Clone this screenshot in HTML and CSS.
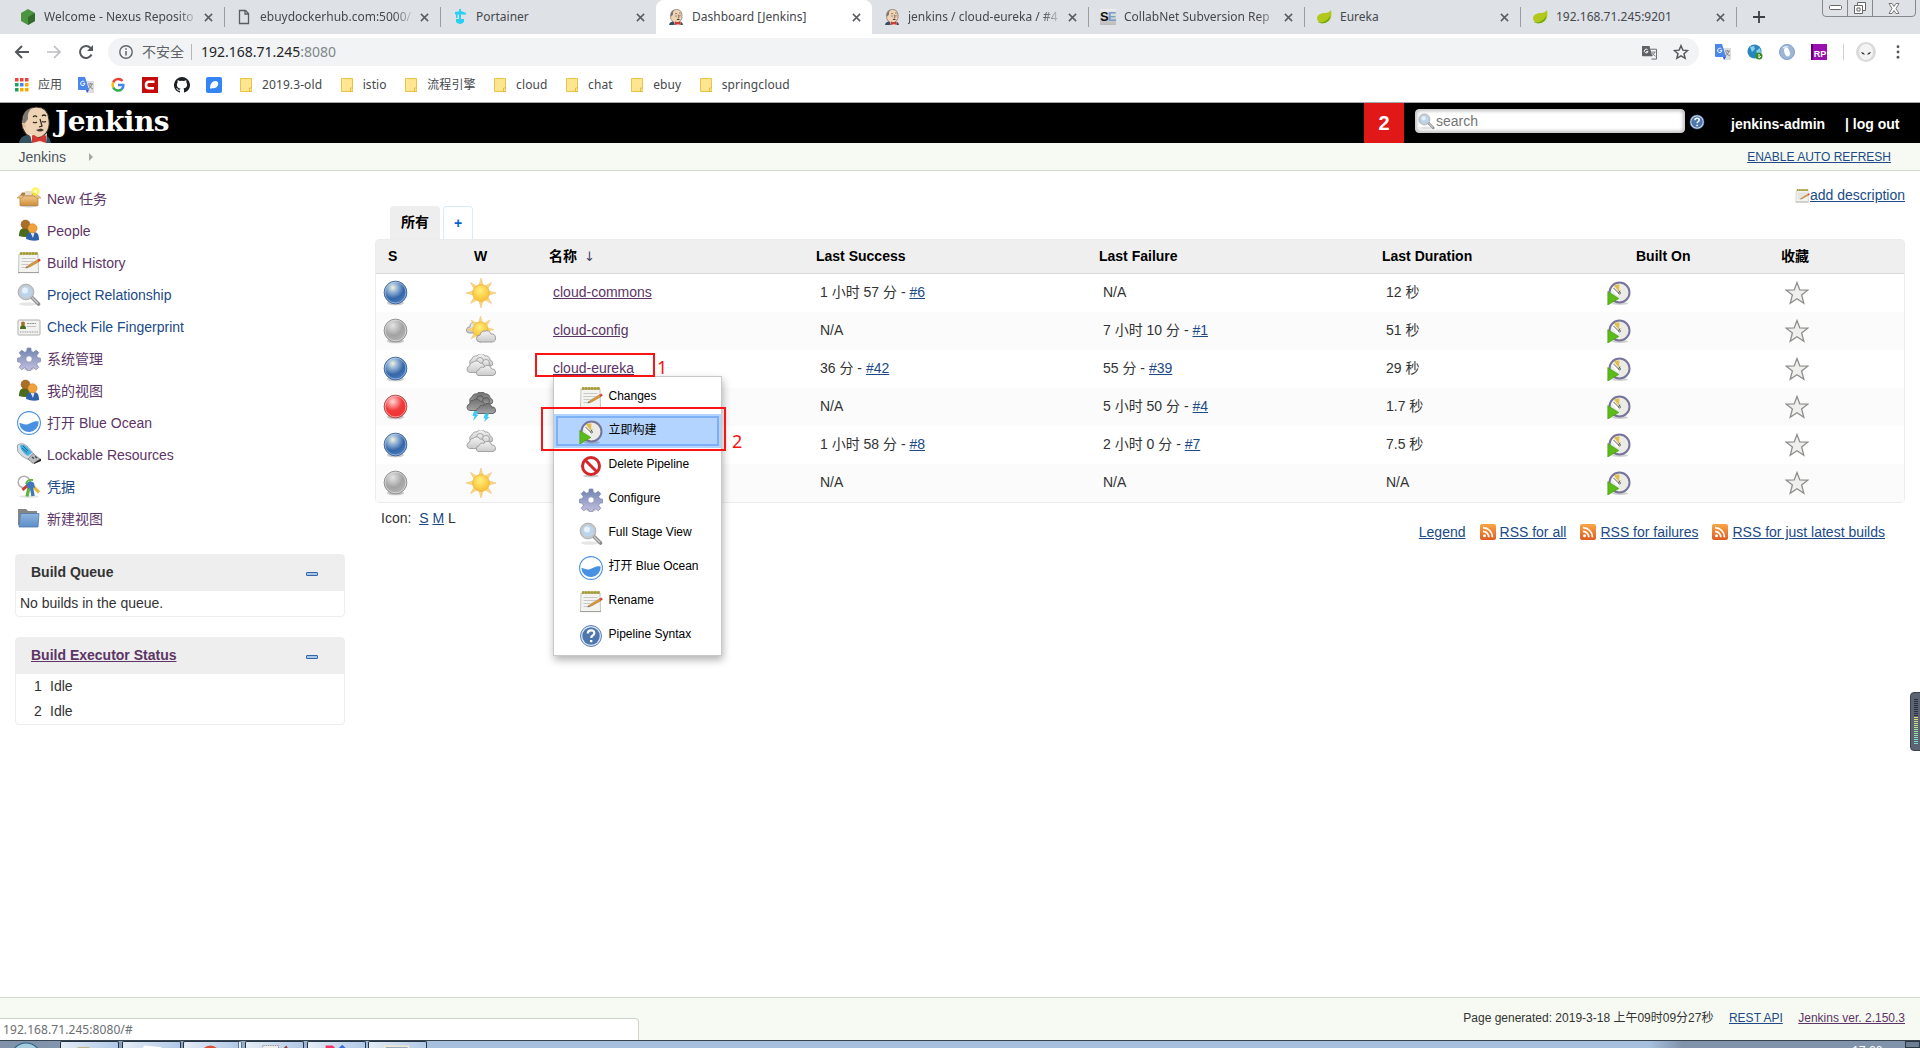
FILE: index.html
```html
<!DOCTYPE html>
<html lang="zh-CN">
<head>
<meta charset="utf-8">
<title>Dashboard [Jenkins]</title>
<link rel="stylesheet" href="styles.css">
</head>
<body>
<svg class="sprite" width="0" height="0">
  <defs>
    <radialGradient id="gBlue" cx=".38" cy=".28" r=".75"><stop offset="0" stop-color="#f2f2dc"/><stop offset=".3" stop-color="#8fb0d4"/><stop offset=".65" stop-color="#3566a8"/><stop offset="1" stop-color="#4a7cc0"/></radialGradient>
    <radialGradient id="gGrey" cx=".38" cy=".28" r=".8"><stop offset="0" stop-color="#e4e4e4"/><stop offset=".55" stop-color="#a2a2a2"/><stop offset="1" stop-color="#b8b8b8"/></radialGradient>
    <radialGradient id="gRed" cx=".38" cy=".28" r=".8"><stop offset="0" stop-color="#ffd9d9"/><stop offset=".5" stop-color="#f23c3c"/><stop offset="1" stop-color="#ee2b2b"/></radialGradient>
    <radialGradient id="gSun" cx=".45" cy=".35" r=".7"><stop offset="0" stop-color="#fff07a"/><stop offset="1" stop-color="#fbb92c"/></radialGradient>
    <linearGradient id="gCloud" x2="0" y2="1"><stop offset="0" stop-color="#f3f3f3"/><stop offset="1" stop-color="#cacaca"/></linearGradient>
    <linearGradient id="gDark" x2="0" y2="1"><stop offset="0" stop-color="#707070"/><stop offset="1" stop-color="#a3a3a3"/></linearGradient>
    <linearGradient id="gGear" x2="0" y2="1"><stop offset="0" stop-color="#6d83b0"/><stop offset="1" stop-color="#c5c0e0"/></linearGradient>
    <linearGradient id="gBox" x2="0" y2="1"><stop offset="0" stop-color="#f0c98b"/><stop offset="1" stop-color="#cf8e3c"/></linearGradient>
    <linearGradient id="gFolder" x2="0" y2="1"><stop offset="0" stop-color="#8fb4dc"/><stop offset="1" stop-color="#5c8fc9"/></linearGradient>
    <linearGradient id="gRss" x2="0" y2="1"><stop offset="0" stop-color="#f9a646"/><stop offset="1" stop-color="#dc5d22"/></linearGradient>
  </defs>
  <symbol id="ball-blue" viewBox="0 0 26 26"><ellipse cx="13" cy="23.5" rx="9" ry="2.3" fill="#000" opacity=".2"/><circle cx="13" cy="12.5" r="11.8" fill="url(#gBlue)" stroke="#3b659c"/><circle cx="13" cy="12.5" r="10.8" fill="none" stroke="#cddcf0" stroke-opacity=".55"/></symbol>
  <symbol id="ball-grey" viewBox="0 0 26 26"><ellipse cx="13" cy="23.5" rx="9" ry="2.3" fill="#000" opacity=".2"/><circle cx="13" cy="12.5" r="11.8" fill="url(#gGrey)" stroke="#8b8b8b"/><circle cx="13" cy="12.5" r="10.8" fill="none" stroke="#eee" stroke-opacity=".6"/></symbol>
  <symbol id="ball-red" viewBox="0 0 26 26"><ellipse cx="13" cy="23.5" rx="9" ry="2.3" fill="#000" opacity=".2"/><circle cx="13" cy="12.5" r="11.8" fill="url(#gRed)" stroke="#b04848"/><circle cx="13" cy="12.5" r="10.8" fill="none" stroke="#ffc4c4" stroke-opacity=".7"/></symbol>
  <symbol id="sun" viewBox="0 0 30 30"><path fill="#fbd67c" stroke="#e8bf6a" stroke-width=".5" d="M15 0l2 7h-4zM15 30l2-7h-4zM0 15l7-2v4zM30 15l-7-2v4zM4.4 4.4l6.4 3.6-2.8 2.8zM25.600 4.400l-3.600 6.400-2.800-2.800zM4.400 25.600l3.600-6.400 2.800 2.800zM25.600 25.600l-6.400-3.600 2.800-2.800z"/><circle cx="15" cy="15" r="8.300" fill="url(#gSun)" stroke="#f4b93f"/></symbol>
  <symbol id="cloud" viewBox="0 0 30 24"><g stroke="#9b9b9b" stroke-width=".9" fill="url(#gCloud)"><path d="M5 11a3.500 3.500 0 0 1 1-6 4 4 0 0 1 5-3 4.500 4.500 0 0 1 8 0 4 4 0 0 1 5 4 3.500 3.500 0 0 1 2 5.500z"/><circle cx="14" cy="7" r="3.500"/><circle cx="20" cy="9" r="3.500"/><path d="M3.500 18.500a3.300 3.300 0 0 1 0-6.400 4 4 0 0 1 4-4 4 4 0 0 1 6.500 1 4 4 0 0 1 4.500 4l-.5 5.400z"/><path d="M12 21.500a3 3 0 0 1 1-5.700 3.500 3.500 0 0 1 5-2.300 4 4 0 0 1 7.500 1.500 3.300 3.300 0 0 1 1.500 6.500z"/></g></symbol>
  <symbol id="partly" viewBox="0 0 30 30"><g stroke="#9b9b9b" fill="url(#gCloud)"><path d="M3 17a3 3 0 0 1 1-6 4 4 0 0 1 8-1v7z"/></g><use href="#sun" width="27" height="27" x="1" y="0"/><path stroke="#9b9b9b" fill="url(#gCloud)" d="M14 26a3.500 3.500 0 0 1 0-7 5 5 0 0 1 5-4 5 5 0 0 1 6 3 4 4 0 0 1 1 8z"/></symbol>
  <symbol id="storm" viewBox="0 0 30 30"><g stroke="#5c5c5c" stroke-width=".9" fill="url(#gDark)"><path d="M5 11a3.500 3.500 0 0 1 1-6 4 4 0 0 1 5-3 4.500 4.500 0 0 1 8 0 4 4 0 0 1 5 4 3.500 3.500 0 0 1 2 5.500z"/><circle cx="14" cy="7" r="3.500"/><circle cx="20" cy="9" r="3.500"/><path d="M3.500 18.500a3.300 3.300 0 0 1 0-6.400 4 4 0 0 1 4-4 4 4 0 0 1 6.500 1 4 4 0 0 1 4.500 4l-.5 5.400z"/><path d="M12 21.500a3 3 0 0 1 1-5.700 3.500 3.500 0 0 1 5-2.300 4 4 0 0 1 7.500 1.500 3.300 3.300 0 0 1 1.500 6.500z"/></g><path fill="#3ccbf5" d="M8 19h4l-1.500 3.500h2L7 29l1.500-5h-2zM19 21.500h4l-1.500 3.500h2L18 30l1.500-3.500h-2z"/></symbol>
  <symbol id="clock" viewBox="0 0 24 24"><ellipse cx="13" cy="22.500" rx="8" ry="1.500" fill="#000" opacity=".18"/><circle cx="12.500" cy="11.500" r="10" fill="#ecece7" stroke="#77759b" stroke-width="2"/><path d="M12 11L7 4.500Q10 3 12.500 3.500z" fill="#e2bf4d"/><path d="M4.500 8l2-1.500 6 6.500-2 2z" fill="#fff"/><path d="M6.500 7l5.500 5.500M13 9.500l-1 2" stroke="#555" stroke-width=".9" fill="none"/><circle cx="12.500" cy="12" r="1" fill="#fff" stroke="#444" stroke-width=".8"/><path d="M.8 10.500v13.500l11-6.500z" fill="#5cbb18" stroke="#3f9410" stroke-width=".6"/></symbol>
  <symbol id="star" viewBox="0 0 24 24"><path d="M12 1.500l2.800 7.400 8 .3-6.200 4.800 2.200 8.200-6.800-4.500-6.800 4.500L7.400 14 1.200 9.200l8-.3z" fill="#efefed" stroke="#8d8d8a" stroke-width="1.300"/></symbol>
  <symbol id="newjob" viewBox="0 0 24 24"><ellipse cx="12" cy="19" rx="9" ry="1.500" opacity=".2"/><path d="M5 5.500h13l3 3H3z" fill="#ad7b3a"/><path d="M8 4h7v4H8z" fill="#e6dcc8"/><path d="M3 9h18v9.500H3z" fill="url(#gBox)" stroke="#b57b32" stroke-width=".7"/><path d="M3 8.500L0 11h5l2-2zM21 8.500l3 2.500h-5l-2-2z" fill="#edc68c" stroke="#b57b32" stroke-width=".5"/><circle cx="18.500" cy="4.500" r="4.200" fill="#fff34c" opacity=".85"/><circle cx="18.500" cy="4.500" r="1.800" fill="#fffcc0"/></symbol>
  <symbol id="people" viewBox="0 0 24 24"><path d="M2 17c0-6 2-8 6-8s5 3 5 8q-5 2-11 0z" fill="#4b6b1a"/><circle cx="8.500" cy="5.500" r="4.500" fill="#a86f26" stroke="#8a5a1c" stroke-width=".5"/><path d="M9 20c0-5 2-7 7-7s6 3 6 8q-6 2-13-1z" fill="#2f62ab"/><path d="M13.500 13.500h4L16 19z" fill="#e9eff8"/><circle cx="15.500" cy="9.300" r="4.600" fill="#f0a03c" stroke="#c57a1c" stroke-width=".5"/></symbol>
  <symbol id="notepad" viewBox="0 0 24 24"><path d="M2 3h19l.5 18.500h-20z" fill="#f3f3ef" stroke="#b5b5b0" stroke-width=".8"/><path d="M1 21.200h21v.9H1z" fill="#999"/><path d="M3 1.300h18v2.400H3z" fill="#b5ad45"/><path d="M4 1v3M7 1v3M10 1v3M13 1v3M16 1v3M19 1v3" stroke="#857d28" stroke-width=".8"/><path d="M4.500 7.500h14M4.500 10.500h12M4.500 13.500h7M4.500 16.500h4" stroke="#c4c4c4" stroke-width=".9"/><path d="M9.500 17l2-2.800L21 8.500l1.200 2L13 15.700z" fill="#dc9a3c" stroke="#9c6a28" stroke-width=".5"/><path d="M20.500 8.800l2-1.200 1.300 1.900-2.200 1.300z" fill="#d8433a"/><path d="M8 17.500l2.500-1.500-.8-.8z" fill="#444"/></symbol>
  <symbol id="lens" viewBox="0 0 24 24"><ellipse cx="11" cy="21" rx="9" ry="1.800" opacity=".1"/><path d="M14.500 14l7 7" stroke="#8a8a8a" stroke-width="3.600" stroke-linecap="round"/><path d="M14.500 14l6.500 6.500" stroke="#c8c8c8" stroke-width="1.600"/><circle cx="9" cy="9" r="6.800" fill="#bcd5ee" stroke="#c6c8ca" stroke-width="2.200"/><circle cx="9" cy="9" r="7.900" fill="none" stroke="#909498" stroke-width=".6"/><circle cx="8" cy="7.500" r="3" fill="#e6f1fb"/></symbol>
  <symbol id="card" viewBox="0 0 24 24"><rect x="1" y="5" width="22" height="15" rx="1" fill="#f2f2f0" stroke="#b0b0ae"/><path d="M3 14q0-4 3-4t3 4z" fill="#4b6b1a"/><circle cx="6" cy="8.500" r="2" fill="#a86f26"/><path d="M10 8.500h9" stroke="#888" stroke-dasharray="2 .6" stroke-width=".9"/><path d="M10 11.500h9" stroke="#c4c4c4"/><path d="M3 17h18" stroke="#777" stroke-dasharray="1 .7" stroke-width=".8"/></symbol>
  <symbol id="gear" viewBox="0 0 24 24"><ellipse cx="12" cy="22" rx="5" ry="1.300" opacity=".2"/><path fill="url(#gGear)" stroke="#7b83a8" stroke-width=".7" fill-rule="evenodd" d="M10.200 1h3.600l.5 3.400 2.200.9 2.800-2.100 2.500 2.500-2.100 2.800.9 2.200 3 .5v3.600l-3 .5-.9 2.200 2.100 2.800-2.500 2.500-2.800-2.100-2.200.9-.5 2h-3.600l-.5-2-2.200-.9-2.800 2.100-2.500-2.500 2.100-2.800-.9-2.200-3-.5v-3.600l3-.5.900-2.200-2.100-2.800 2.500-2.500 2.800 2.100 2.200-.9zM12 8.800a3.200 3.200 0 1 0 0 6.400 3.200 3.200 0 1 0 0-6.400z"/></symbol>
  <symbol id="ocean" viewBox="0 0 24 24"><circle cx="12" cy="12" r="11.400" fill="#fff" stroke="#4a90e2" stroke-width="1.100"/><path d="M2.300 12c3 0 4 2 7.500 1.500S16 9.500 21.700 10.500A9.700 9.700 0 0 1 2.300 12z" fill="#4a90e2"/></symbol>
  <symbol id="usb" viewBox="0 0 24 24"><path d="M.5 2Q5-1 10 3l7 8-4.500 6Q4 14 .5 8z" fill="#d6dae0" stroke="#9096a0" stroke-width=".8"/><path d="M3 2.500q3.500-2 7 1.500l5 5.500-4 3.500Q4 9 3 2.500z" fill="#3fb0e2"/><path d="M6 3l5 5M5 5l5 4.500" stroke="#1d6996"/><path d="M16 10.500l7 5.500-7 4.500-5-4.500z" fill="#b9bcc0" stroke="#777" stroke-width=".7"/><path d="M17 20l7-4.500v2.500l-7 3z" fill="#222"/><path d="M15 14l2 1.500M18 13.500l2 1.500" stroke="#444" stroke-width="1.300"/></symbol>
  <symbol id="keys" viewBox="0 0 24 24"><ellipse cx="12" cy="21.500" rx="10" ry="1.500" opacity=".1"/><circle cx="7" cy="7" r="5.800" fill="none" stroke="#b0b0b0" stroke-width="1.500"/><path d="M12 9L5.500 15" stroke="#d13a30" stroke-width="3"/><path d="M14 9l8 8.500" stroke="#e3b83a" stroke-width="3.200"/><path d="M12.500 10L10 21.500" stroke="#5fb336" stroke-width="3.200"/><path d="M14 10l2 11" stroke="#4178bd" stroke-width="3.400"/><path d="M9 9q4-5 8-1l1 5q-4-2-7 1z" fill="#4178bd"/><path d="M9 9q1-5 7-4" stroke="#5fb336" stroke-width="1.800" fill="none"/></symbol>
  <symbol id="folder" viewBox="0 0 24 24"><path d="M1 2h8l2 2h9v14H1z" fill="#858585"/><path d="M3.500 6.500h18.500L21 20H2z" fill="url(#gFolder)" stroke="#5079ac" stroke-width=".8"/></symbol>
  <symbol id="forbid" viewBox="0 0 24 24"><ellipse cx="12" cy="22" rx="8" ry="1.500" opacity=".2"/><circle cx="12" cy="12" r="8.500" fill="#fff" stroke="#d2282b" stroke-width="3"/><path d="M6 6l12 12" stroke="#d2282b" stroke-width="3"/></symbol>
  <symbol id="help" viewBox="0 0 24 24"><circle cx="12" cy="12" r="10.500" fill="#dfe7f2" stroke="#4871a8" stroke-width=".9"/><circle cx="12" cy="12" r="8.700" fill="#4c76ad"/><path d="M8.800 9.500q0-3.200 3.300-3.200t3.200 2.800q0 1.600-1.600 2.400-1.500.8-1.500 2.500M12.200 16v2.200" fill="none" stroke="#fff" stroke-width="2.300"/></symbol>
  <symbol id="rss" viewBox="0 0 16 16"><rect width="16" height="16" rx="2" fill="url(#gRss)"/><circle cx="4.500" cy="11.700" r="1.500" fill="#fff"/><path d="M3 7.300a6 6 0 0 1 5.800 5.900M3 3.700a9.500 9.500 0 0 1 9.500 9.500" fill="none" stroke="#fff" stroke-width="1.700"/></symbol>
  <symbol id="close" viewBox="0 0 10 10"><path d="M1 1l8 8M9 1l-8 8" stroke="#5a5d61" stroke-width="1.700"/></symbol>
  <symbol id="butler" viewBox="0 0 34 37"><path d="M1 37q1-7 8-8l14-1q9 1 10 9z" fill="#335061"/><path d="M8 28Q3 22 4 15 5 2 18 1q12 0 13 13 1 8-3 13-4 5-9 5-7 0-11-4z" fill="#efd3b5" stroke="#3a2b25"/><path d="M5 14Q5 4 14 2q-5 4-4 11l-3 4q-2 1-2 3z" fill="#7b7775"/><path d="M4 17q3-1 4 3-1 3-3 2z" fill="#e3bd9d"/><path d="M15 11q2-2 4 0M24 10q2-2 4 0M15 16q2 1.500 4 0M24 15.500q2 1 4 0M22 13l2 7-3 1" fill="none" stroke="#2d2421" stroke-width="1.200"/><path d="M18 24q4 3 8 0l-3-1.500z" fill="#41352e"/><path d="M12 28l9 6 8-7-1 10H14z" fill="#f4f1ea"/><path d="M14 31q-1-2 2-2l5 3 5-3q3 0 2 3v5l-6-2-8 2z" fill="#d33833"/></symbol>
  <symbol id="leaf" viewBox="0 0 16 16"><path d="M1 8Q3 4 9 4q4 0 6-3 2.500 13-9 13Q1 14 1 8z" fill="#b2c81d"/><path d="M1 13.500q9 1 13.500-7-.5 7-8 8z" fill="#6da914"/></symbol>
  <symbol id="dir" viewBox="0 0 12 14"><path d="M.5.500h11v13H.5z" fill="#ffe58f" stroke="#e8c547"/><path d="M9.500 10h2.500v3.500h-2.500z" fill="#ffe58f" stroke="#dcb430" stroke-width=".8"/></symbol>
  <symbol id="translate" viewBox="0 0 16 16"><path d="M6 4h10v12H9z" fill="#dcdde0"/><path d="M0 0h7l4 13H1q-1 0-1-1z" fill="#4a86ec"/><path d="M8 13h3l-2 3z" fill="#2f5fc0"/><path d="M6.500 5A2.200 2.200 0 1 0 7 6.700H4.800" fill="none" stroke="#fff"/><path d="M10 7h5M12.500 6v1M14 7q-1 4-4 5M11 8q1 3 4 4" stroke="#777" stroke-width=".8" fill="none"/></symbol>
</svg>

<header class="tabstrip">
  <div class="tab"><svg class="fav" viewBox="0 0 16 16"><path d="M8 0l7 4v8l-7 4-7-4V4z" fill="#4c9440"/><path d="M8 8l7-4v8l-7 4z" fill="#336b2c"/></svg><span class="ttl fade">Welcome - Nexus Reposito</span><svg class="x"><use href="#close"/></svg></div>
  <div class="tab"><svg class="fav" viewBox="0 0 16 16"><path d="M3.500 1.500h6l3 3v10h-9zM9 1.500v3.500h3.500" fill="none" stroke="#5a5d61" stroke-width="1.300"/></svg><span class="ttl fade">ebuydockerhub.com:5000/</span><svg class="x"><use href="#close"/></svg></div>
  <div class="tab last"><svg class="fav" viewBox="0 0 16 16"><path d="M3 3l6-1 5 2v1.500H3zM7 0h2v10H7zM4 5h1.500v4H4zM4 10h8v3q-4 4-8 0z" fill="#2ad0f4"/></svg><span class="ttl">Portainer</span><svg class="x"><use href="#close"/></svg></div>
  <div class="tab active"><svg class="fav"><use href="#butler"/></svg><span class="ttl">Dashboard [Jenkins]</span><svg class="x"><use href="#close"/></svg></div>
  <div class="tab"><svg class="fav"><use href="#butler"/></svg><span class="ttl fade">jenkins / cloud-eureka / #4</span><svg class="x"><use href="#close"/></svg></div>
  <div class="tab"><span class="fav se"><b>S</b><i>E</i></span><span class="ttl fade">CollabNet Subversion Rep</span><svg class="x"><use href="#close"/></svg></div>
  <div class="tab"><svg class="fav"><use href="#leaf"/></svg><span class="ttl">Eureka</span><svg class="x"><use href="#close"/></svg></div>
  <div class="tab"><svg class="fav"><use href="#leaf"/></svg><span class="ttl">192.168.71.245:9201</span><svg class="x"><use href="#close"/></svg></div>
  <svg class="plus" viewBox="0 0 12 12"><path d="M6 0v12M0 6h12" stroke="#3c4043" stroke-width="1.800"/></svg>
  <div class="winctl"><span><svg width="13" height="6"><rect x=".5" y=".5" width="12" height="4" rx="1" fill="#fff" stroke="#666"/></svg></span><span><svg width="14" height="13" viewBox="0 0 14 13" fill="#fff" stroke="#666"><path d="M4.500.500h8v8h-8z"/><path d="M1.500 3.500h8v8h-8zM4 6h3v3H4z"/></svg></span><span><svg width="12" height="11" viewBox="0 0 12 11"><path d="M1 .500h3l2 3 2-3h3L8 5.500l3 5H8l-2-3-2 3H1l3-5z" fill="#fff" stroke="#777"/></svg></span></div>
</header>

<div class="toolbar">
  <svg class="nav" viewBox="0 0 16 16"><path d="M15 8H2M8 2L2 8l6 6" fill="none" stroke="#54575b" stroke-width="2"/></svg>
  <svg class="nav" viewBox="0 0 16 16"><path d="M1 8h13M8 2l6 6-6 6" fill="none" stroke="#bcbec1" stroke-width="1.700"/></svg>
  <svg class="nav" viewBox="0 0 16 16"><path d="M13.500 10.500A6 6 0 1 1 12.500 4" fill="none" stroke="#54575b" stroke-width="2"/><path d="M15 1v6H9z" fill="#54575b"/></svg>
  <div class="omnibox">
    <svg width="14" height="14" viewBox="0 0 14 14"><circle cx="7" cy="7" r="6.200" fill="none" stroke="#5f6368" stroke-width="1.400"/><path d="M7 6v4.500M7 3.200v1.600" stroke="#5f6368" stroke-width="1.500"/></svg>
    <span class="insecure">不安全</span>
    <span class="url">192.168.71.245<em>:8080</em></span>
    <svg class="tr" width="15" height="15" viewBox="0 0 16 16"><path d="M0 1h8l3 11H1q-1 0-1-1z" fill="#5f6368"/><path d="M9 4.500h6.500v10.500H10" fill="none" stroke="#5f6368"/><path d="M6 5A2 2 0 1 0 6.500 7H4.500" fill="none" stroke="#fff"/><path d="M10 7.500h4.500M13.500 7.500q-1 3-3 4M11 8.500q1 2.500 3.500 3.500" stroke="#5f6368" fill="none" stroke-width=".8"/></svg>
    <svg width="16" height="16" viewBox="0 0 24 24"><path d="M12 2.500l2.800 6.700 7.200.6-5.500 4.700 1.700 7L12 17.800l-6.200 3.700 1.700-7L2 9.800l7.200-.6z" fill="none" stroke="#54575b" stroke-width="2.200"/></svg>
  </div>
  <div class="exts">
    <svg><use href="#translate"/></svg>
    <svg viewBox="0 0 16 16"><circle cx="7.500" cy="7.500" r="7" fill="#2787bd"/><path d="M3 3l4-1 1 3-3 3zM9 7l4-3 1 5-3 2z" fill="#8ad0e6"/><circle cx="12" cy="12" r="3.500" fill="#3c8a2a"/><path d="M12 10v4l2-2" stroke="#fff" fill="none"/></svg>
    <svg viewBox="0 0 16 16"><circle cx="8" cy="8" r="7.500" fill="#9db6d6" stroke="#7d9fc9"/><ellipse cx="8" cy="8" rx="2.600" ry="4.500" fill="#fff" transform="rotate(-20 8 8)"/><path d="M4 4q3-2 5-1" stroke="#e4edf7" stroke-width="1.500" fill="none"/></svg>
    <span class="rp">RP</span>
  </div>
  <svg class="avatar" viewBox="0 0 20 20"><circle cx="10" cy="10" r="10" fill="#dadada"/><ellipse cx="10" cy="10" rx="7" ry="8" fill="#f3f3f3"/><path d="M5 10q3 0 4 2.500-3 .5-4-2.500zM15 10q-3 0-4 2.500 3 .5 4-2.500z" fill="#333"/></svg>
  <svg class="dots" viewBox="0 0 4 16"><circle cx="2" cy="2" r="1.600"/><circle cx="2" cy="8" r="1.600"/><circle cx="2" cy="14" r="1.600"/></svg>
</div>

<nav class="bookmarks">
  <svg class="apps" viewBox="0 0 14 14"><path d="M0 0h3.500v3.500H0zM5 0h3.500v3.500H5zM10 0h3.500v3.500H10z" fill="#e8453c"/><path d="M0 5h3.500v3.500H0zM0 10h3.500v3.500H0z" fill="#1aa260"/><path d="M5 5h3.500v3.500H5z" fill="#4285f4"/><path d="M10 5h3.500v3.500H10zM5 10h3.500v3.500H5zM10 10h3.500v3.500H10z" fill="#f9ab00"/></svg>
  <span class="apptxt">应用</span>
  <svg class="bi"><use href="#translate"/></svg>
  <svg class="bi" viewBox="0 0 16 16"><g fill="none" stroke-width="2.500"><path d="M12.500 4A5.500 5.500 0 0 0 3.200 5.500" stroke="#ea4335"/><path d="M3.200 5.500a5.500 5.500 0 0 0 0 5" stroke="#fbbc05"/><path d="M3.200 10.500a5.500 5.500 0 0 0 8.500 1.800" stroke="#34a853"/><path d="M11.700 12.300Q13.500 10.500 13.300 8H8" stroke="#4285f4"/></g></svg>
  <svg class="bi" viewBox="0 0 16 16"><path d="M0 0h16v16H0z" fill="#c50c0c"/><path d="M12.500 4.700H7Q4 4.700 4 8t3 3.300h5" fill="none" stroke="#fff" stroke-width="2.600"/></svg>
  <svg class="bi" viewBox="0 0 16 16"><path fill="#1b1f23" d="M8 0a8 8 0 0 0-2.500 15.600c.4.100.5-.2.500-.4v-1.500c-2.200.5-2.700-.9-2.700-.9-.4-.9-.9-1.200-.9-1.200-.7-.5.100-.5.100-.5.800.1 1.200.8 1.200.8.700 1.300 1.900.9 2.300.7.100-.5.300-.9.500-1.100-1.800-.2-3.600-.9-3.600-4 0-.9.300-1.600.8-2.100-.1-.2-.4-1 .1-2.100 0 0 .7-.2 2.200.8a7.500 7.500 0 0 1 4 0c1.500-1 2.200-.8 2.200-.8.400 1.100.2 1.900.1 2.100.5.600.8 1.300.8 2.100 0 3.100-1.900 3.700-3.700 3.900.3.300.6.800.6 1.500v2.300c0 .2.100.5.500.4A8 8 0 0 0 8 0z"/></svg>
  <svg class="bi" viewBox="0 0 16 16"><rect width="16" height="16" rx="2" fill="#3385f5"/><path d="M4 11q0-6 5-7 4 0 3 4-2 4-6 3l-1 1z" fill="#fff"/></svg>
  <span class="bm"><svg><use href="#dir"/></svg>2019.3-old</span>
  <span class="bm"><svg><use href="#dir"/></svg>istio</span>
  <span class="bm"><svg><use href="#dir"/></svg>流程引擎</span>
  <span class="bm"><svg><use href="#dir"/></svg>cloud</span>
  <span class="bm"><svg><use href="#dir"/></svg>chat</span>
  <span class="bm"><svg><use href="#dir"/></svg>ebuy</span>
  <span class="bm"><svg><use href="#dir"/></svg>springcloud</span>
</nav>

<div class="jheader">
  <svg class="logo"><use href="#butler"/></svg><span class="brand">Jenkins</span>
  <span class="alerts">2</span>
  <div class="search"><svg><use href="#lens"/></svg>search</div>
  <svg class="hlp"><use href="#help"/></svg>
  <span class="user">jenkins-admin</span><span class="logout">| log out</span>
</div>
<div class="crumbs"><span>Jenkins</span><svg width="4" height="8"><path d="M0 0l4 4-4 4z" fill="#a5a8a2"/></svg><a class="refresh">ENABLE AUTO REFRESH</a></div>

<div class="page">
  <aside>
    <div class="tasks">
      <a class="v"><svg><use href="#newjob"/></svg>New 任务</a>
      <a class="v"><svg><use href="#people"/></svg>People</a>
      <a class="v"><svg><use href="#notepad"/></svg>Build History</a>
      <a><svg><use href="#lens"/></svg>Project Relationship</a>
      <a><svg><use href="#card"/></svg>Check File Fingerprint</a>
      <a class="v"><svg><use href="#gear"/></svg>系统管理</a>
      <a class="v"><svg><use href="#people"/></svg>我的视图</a>
      <a class="v"><svg><use href="#ocean"/></svg>打开 Blue Ocean</a>
      <a class="v"><svg><use href="#usb"/></svg>Lockable Resources</a>
      <a><svg><use href="#keys"/></svg>凭据</a>
      <a class="v"><svg><use href="#folder"/></svg>新建视图</a>
    </div>
    <section class="pane queue"><h2>Build Queue<i></i></h2><p>No builds in the queue.</p></section>
    <section class="pane exec"><h2><a>Build Executor Status</a><i></i></h2><ul><li><b>1</b>Idle</li><li><b>2</b>Idle</li></ul></section>
  </aside>
  <main>
    <div class="desc"><svg><use href="#notepad"/></svg><a>add description</a></div>
    <div class="views"><span class="on">所有</span><span class="add">+</span></div>
    <div class="table">
      <div class="row head"><span>S</span><span>W</span><span>名称 <small>↓</small></span><span>Last Success</span><span>Last Failure</span><span>Last Duration</span><span>Built On</span><span>收藏</span></div>
      <div class="row"><svg class="ball"><use href="#ball-blue"/></svg><svg class="wx"><use href="#sun"/></svg><span><a class="v">cloud-commons</a></span><span>1 小时 57 分 - <a>#6</a></span><span>N/A</span><span>12 秒</span><svg class="ic"><use href="#clock"/></svg><svg class="ic st"><use href="#star"/></svg></div>
      <div class="row"><svg class="ball"><use href="#ball-grey"/></svg><svg class="wx"><use href="#partly"/></svg><span><a class="v">cloud-config</a></span><span>N/A</span><span>7 小时 10 分 - <a>#1</a></span><span>51 秒</span><svg class="ic"><use href="#clock"/></svg><svg class="ic st"><use href="#star"/></svg></div>
      <div class="row"><svg class="ball"><use href="#ball-blue"/></svg><svg class="wx cl"><use href="#cloud"/></svg><span><a class="v">cloud-eureka</a></span><span>36 分 - <a>#42</a></span><span>55 分 - <a>#39</a></span><span>29 秒</span><svg class="ic"><use href="#clock"/></svg><svg class="ic st"><use href="#star"/></svg></div>
      <div class="row"><svg class="ball"><use href="#ball-red"/></svg><svg class="wx"><use href="#storm"/></svg><span></span><span>N/A</span><span>5 小时 50 分 - <a>#4</a></span><span>1.7 秒</span><svg class="ic"><use href="#clock"/></svg><svg class="ic st"><use href="#star"/></svg></div>
      <div class="row"><svg class="ball"><use href="#ball-blue"/></svg><svg class="wx cl"><use href="#cloud"/></svg><span></span><span>1 小时 58 分 - <a>#8</a></span><span>2 小时 0 分 - <a>#7</a></span><span>7.5 秒</span><svg class="ic"><use href="#clock"/></svg><svg class="ic st"><use href="#star"/></svg></div>
      <div class="row"><svg class="ball"><use href="#ball-grey"/></svg><svg class="wx"><use href="#sun"/></svg><span></span><span>N/A</span><span>N/A</span><span>N/A</span><svg class="ic"><use href="#clock"/></svg><svg class="ic st"><use href="#star"/></svg></div>
    </div>
    <div class="below">
      <div class="sizes">Icon: &nbsp;<a>S</a> <a>M</a> L</div>
      <div class="feeds"><a>Legend</a><span><svg><use href="#rss"/></svg><a>RSS for all</a></span><span><svg><use href="#rss"/></svg><a>RSS for failures</a></span><span><svg><use href="#rss"/></svg><a>RSS for just latest builds</a></span></div>
    </div>
  </main>
</div>

<footer><span>Page generated: 2019-3-18 上午09时09分27秒</span><a>REST API</a><a class="v">Jenkins ver. 2.150.3</a></footer>
<div class="taskbar">
  <span class="orb"></span>
  <span class="tk"><svg viewBox="0 0 58 8"><path d="M14 8h16l-2-2H15z" fill="#b9a768"/></svg></span>
  <span class="tk"><svg viewBox="0 0 58 8"><path d="M18 8l2-4 20 2-2 2z" fill="#fff"/></svg></span>
  <span class="tk stack"><svg viewBox="0 0 58 8"><circle cx="26" cy="15" r="11" fill="#dd4b39"/></svg></span>
  <span class="tk"><svg viewBox="0 0 58 8"><path d="M15 4h18v4H15z" fill="#eee" stroke="#777" stroke-dasharray="1 1"/><path d="M38 8l4-4 2 4z" fill="#933"/></svg></span>
  <span class="tk"><svg viewBox="0 0 58 8"><path d="M16 4h8l4 4H16z" fill="#fa2e68"/><path d="M30 8l5-5 5 5z" fill="#3f6ad8"/></svg></span>
  <span class="tk"><svg viewBox="0 0 58 8"><path d="M14 8V5h27v3" fill="#7d97bf" stroke="#eee8d0" stroke-width="2"/></svg></span>
  <span class="tray"><span>17:00</span></span><span class="showdesk"></span>
</div>

<div class="statusurl">192.168.71.245:8080/#</div>

<div class="menu">
  <a><svg><use href="#notepad"/></svg><span>Changes</span></a>
  <a class="sel"><svg><use href="#clock"/></svg><span>立即构建</span></a>
  <a><svg><use href="#forbid"/></svg><span>Delete Pipeline</span></a>
  <a><svg><use href="#gear"/></svg><span>Configure</span></a>
  <a><svg><use href="#lens"/></svg><span>Full Stage View</span></a>
  <a><svg><use href="#ocean"/></svg><span>打开 Blue Ocean</span></a>
  <a><svg><use href="#notepad"/></svg><span>Rename</span></a>
  <a><svg><use href="#help"/></svg><span>Pipeline Syntax</span></a>
</div>
<div class="mark m1"></div><span class="num n1">1</span>
<div class="mark m2"></div><span class="num n2">2</span>
<div class="meter"><i></i></div>
</body>
</html>
```
FILE: styles.css
```css
* { box-sizing: border-box; }
body {
  margin: 0; width: 1920px; height: 1048px; overflow: hidden; position: relative;
  display: flex; flex-direction: column; background: #fff; color: #333;
  font: 14px/20px "Liberation Sans", "Noto Sans CJK SC", sans-serif;
}
svg { display: block; flex: none; }
.sprite { position: absolute; }
a { color: #204a87; text-decoration: underline; }
a.v { color: #5c3566; }

/* browser chrome */
.tabstrip, .toolbar, .bookmarks, .statusurl { font-family: "Noto Sans", "Noto Sans CJK SC", sans-serif; }
.tabstrip { height: 34px; flex: none; background: #dee1e6; display: flex; padding-left: 8px; position: relative; font-size: 12px; color: #45484c; }
.tab { width: 216px; height: 34px; flex: none; display: flex; align-items: center; padding: 0 11px 0 12px; position: relative; }
.tab::after { content: ""; position: absolute; right: -1px; top: 7px; width: 1px; height: 20px; background: #9a9da1; }
.tab.last::after, .tab.active::after { display: none; }
.tab.active { background: #fff; border-radius: 8px 8px 0 0; }
.fav { width: 16px; height: 16px; margin-right: 8px; }
.ttl { flex: 1; min-width: 0; white-space: nowrap; margin-right: 4px; }
.fade { -webkit-mask-image: linear-gradient(90deg, #000 86%, transparent 99%); mask-image: linear-gradient(90deg, #000 86%, transparent 99%); }
.x { width: 9px; height: 9px; }
.se { background: linear-gradient(#eee, #bbb); font: bold 13px/16px "Liberation Sans", sans-serif; letter-spacing: -1px; }
.se b { color: #111; } .se i { color: #7a9cc8; font-style: normal; }
.plus { width: 12px; height: 12px; margin: 11px 0 0 17px; }
.winctl { position: absolute; right: 4px; top: -1px; height: 18px; display: flex; border: 1px solid #85888c; border-radius: 0 0 4px 4px; }
.winctl span { width: 25px; display: flex; justify-content: center; align-items: center; border-right: 1px solid #85888c; }
.winctl span:last-child { width: 42px; border: 0; }
.toolbar { height: 36px; flex: none; display: flex; align-items: center; padding-left: 14px; }
.nav { width: 16px; height: 16px; margin-right: 16px; }
.omnibox { width: 1591px; height: 28px; border-radius: 14px; background: #f1f3f4; margin-left: -2px; display: flex; align-items: center; padding: 0 10px 0 11px; }
.insecure { font-size: 14px; color: #5f6368; margin-left: 9px; padding-right: 7px; border-right: 1px solid #b4b7ba; line-height: 16px; }
.url { font-size: 14px; color: #222528; margin-left: 9px; }
.url em { color: #80868b; font-style: normal; }
.tr { margin-left: auto; margin-right: 16px; }
.exts { display: flex; gap: 16px; margin-left: 16px; padding-right: 16px; border-right: 1px solid #cfd1d4; align-items: center; }
.exts svg { width: 16px; height: 16px; }
.rp { width: 16px; height: 16px; background: #9a0fb0; border-left: 2px solid #5e0070; color: #fff; font: bold 9px/20px "Liberation Sans", sans-serif; text-align: center; }
.avatar { width: 20px; height: 20px; margin-left: 12px; }
.dots { width: 4px; height: 14px; margin-left: 20px; fill: #54575b; }
.bookmarks { height: 33px; flex: none; display: flex; align-items: center; padding: 0 0 3px 15px; border-bottom: 1px solid #a6a8aa; font-size: 12px; color: #45484c; }
.apps { width: 14px; height: 14px; }
.apptxt { margin: 0 16px 0 9px; width: 24px; }
.bi { width: 16px; height: 16px; margin-right: 16px; }
.bm { display: flex; align-items: center; margin: 0 16.500px 0 2px; letter-spacing: .1px; }
.bm svg { width: 12px; height: 14px; margin-right: 10px; }

/* Jenkins header */
.jheader { height: 40px; flex: none; background: #000; display: flex; align-items: center; padding-left: 18px; color: #fff; font-weight: bold; }
.logo { width: 34px; height: 37px; align-self: flex-end; }
.brand { font: bold 28px/34px "DejaVu Serif", serif; letter-spacing: -.5px; margin: -2px 0 0 3px; width: 140px; }
.alerts { margin-left: auto; width: 40px; height: 40px; background: #e01818; font-size: 20px; line-height: 40px; text-align: center; }
.search { width: 270px; height: 24px; margin: -4px 0 0 11px; background: #fff; border: 1px solid #ccc; border-radius: 4px; box-shadow: inset 0 0 4px #999; color: #757575; font-weight: normal; display: flex; align-items: center; padding-left: 2px; }
.search svg { width: 17px; height: 17px; margin-right: 1px; }
.hlp { width: 16px; height: 16px; margin: -2px 0 0 4px; }
.user { margin: 1px 0 0 26px; width: 114px; }
.logout { margin: 1px 21px 0 0; width: 54px; white-space: nowrap; }
.crumbs { height: 28px; flex: none; background: #f6faf2; border-bottom: 1px solid #d3d7cf; display: flex; align-items: center; padding: 0 29px 0 18.500px; color: #4d545d; }
.crumbs svg { margin-left: 23px; }
.refresh { margin-left: auto; font-size: 12px; }

/* page body */
.page { flex: 1; display: flex; min-height: 0; }
aside { width: 375px; padding: 12px 30px 0 15px; }
.tasks a { display: flex; align-items: center; height: 32px; padding-left: 2px; text-decoration: none; }
.tasks svg { width: 24px; height: 24px; margin-right: 6px; }
.pane { border: 1px solid #eee; border-radius: 4px; color: #333; }
.pane h2 { margin: 0; height: 36px; background: #eee; font-size: 14px; line-height: 20px; padding: 0 26px 2px 15px; display: flex; align-items: center; justify-content: space-between; }
.pane h2 a { color: #5c3566; }
.pane h2 i { width: 12px; height: 4px; border: 1px solid #3465a4; background: #a9c5e8; border-radius: 1px; margin-top: 3px; }
.queue { margin-top: 19px; height: 63px; }
.queue p { margin: 2px 0 0 4px; line-height: 21px; }
.exec { margin-top: 20px; height: 88px; }
.exec ul { list-style: none; margin: 0; padding: 0 0 0 18px; }
.exec li { height: 25px; line-height: 25px; }
.exec b { font-weight: normal; display: inline-block; width: 16px; }
main { width: 1530px; }
.desc { display: flex; justify-content: flex-end; align-items: center; height: 20px; margin-top: 14px; }
.desc svg { width: 15px; height: 16px; margin-top: 2px; }
.views { display: flex; gap: 3px; margin: 1px 0 0 15px; height: 34px; font-weight: bold; color: #000; line-height: 33px; text-align: center; }
.views span { width: 50px; height: 34px; border-radius: 4px 4px 0 0; background: #eee; }
.views .add { width: 30px; background: #fff; border: 1px solid #d8ecfa; border-bottom: 0; color: #0b5cd5; line-height: 32px; }
.table { border: 1px solid #ececec; border-radius: 4px; height: 264px; margin-top: -1px; position: relative; }
.row { display: grid; grid-template-columns: 83px 82px 267px 283px 283px 225px 174px 1fr; padding-left: 7px; height: 38px; align-items: center; }
.row:nth-child(odd) { background: #fbfbfb; }
.row.head { height: 34px; background: #efefef; border-bottom: 1px solid #d8d8d8; font-weight: bold; color: #000; padding-bottom: 1px; padding-left: 8px; }
.head small { font: 13px/14px "DejaVu Sans", sans-serif; color: #446; margin-left: 3px; }
.head span:nth-child(1) { padding-left: 4px; }
.head span:nth-child(2) { padding-left: 7px; }
.head span:nth-child(7) { padding-left: 29px; }
.row:not(.head) > span { padding-left: 5px; margin-top: -2px; }
.ball { width: 25px; height: 26px; }
.wx { width: 30px; height: 30px; }
.wx.cl { height: 24px; margin-top: -7px; }
.ic { width: 24px; height: 24px; margin-left: 1px; }
.st { margin-left: 5px; }
.below { display: flex; justify-content: space-between; padding: 5px 20px 0 6px; }
.feeds { display: flex; gap: 14px; padding-top: 14px; }
.feeds span { display: flex; gap: 4px; align-items: center; }
.feeds svg { width: 16px; height: 16px; }

footer { height: 43px; flex: none; background: #f6faf2; border-top: 1px solid #d3d7cf; display: flex; justify-content: flex-end; align-items: center; gap: 15.500px; padding: 0 15px 2px 0; font-size: 12px; }

/* task bar */
.taskbar { height: 8px; flex: none; display: flex; overflow: hidden; border-top: 1px solid #37424f; background: linear-gradient(90deg, #8093ab 40px, #a6bfdd 400px, #a6bfdd 1650px, #8093ab 1682px); }
.orb { width: 60px; background: radial-gradient(circle at 26px 17px, #a6cbdc 14px, #255c83 15px, transparent 16px); }
.tk { width: 59px; height: 8px; margin-right: 2.700px; border: 1px solid #263545; border-bottom: 0; border-radius: 2px 2px 0 0; background: linear-gradient(100deg, #e5ecf5, #b0c8e6); }
.tk svg { height: 7px; width: 58px; }
.tk.stack { border-right: 4px double #5d7894; }
.tray { margin-left: auto; width: 70px; color: #fff; font: 12px/14px "Noto Sans", sans-serif; padding: 3px 0 0 17px; }
.showdesk { width: 15px; border: 1px solid #2d3846; background: #6d7f92; }
.statusurl { position: absolute; left: 0; top: 1018px; width: 639px; height: 22px; background: #fff; border: 1px solid #d0d3cc; border-left: 0; border-bottom: 0; border-radius: 0 4px 0 0; font-size: 12px; line-height: 22px; letter-spacing: .08px; padding-left: 3px; color: #6b6e72; }

/* context menu and annotations */
.menu { position: absolute; left: 553px; top: 376px; width: 169px; height: 280px; padding: 3px 0; background: #fff; border: 1px solid #c8c8c8; box-shadow: 1px 4px 8px rgba(0,0,0,.3); }
.menu a { display: flex; align-items: center; height: 34px; padding: 0 0 0 25px; color: #000; text-decoration: none; font-size: 12px; line-height: 30px; }
.menu span { margin-top: -2px; }
.menu svg { width: 24px; height: 24px; margin: 1px 5.500px 0 0; }
.menu .sel { background: #b3d4ff; box-shadow: inset 0 0 0 2px #b3d4ff, inset 0 0 0 4px #7eb0f8; }
.mark { position: absolute; border: 2px solid #fb1414; }
.m1 { left: 535px; top: 353px; width: 120px; height: 24px; }
.m2 { left: 541px; top: 407px; width: 185px; height: 44px; }
.num { position: absolute; color: #fb1414; font: 18px/20px "Noto Sans", sans-serif; }
.n1 { left: 657px; top: 357px; }
.n2 { left: 732px; top: 431px; }
.meter { position: absolute; left: 1910px; top: 692px; width: 12px; height: 59px; background: #5c6474; border: 1px solid #3e4350; border-radius: 4px 0 0 4px; padding: 6px 0 0 3px; }
.meter i { display: block; width: 4px; height: 46px; background: repeating-linear-gradient(transparent 0 1px, #5c6474 1px 2px), linear-gradient(#2b2f3a 18px, #e8da6a 18px, #a5e39a 32px, #6fd8d8); }
```
